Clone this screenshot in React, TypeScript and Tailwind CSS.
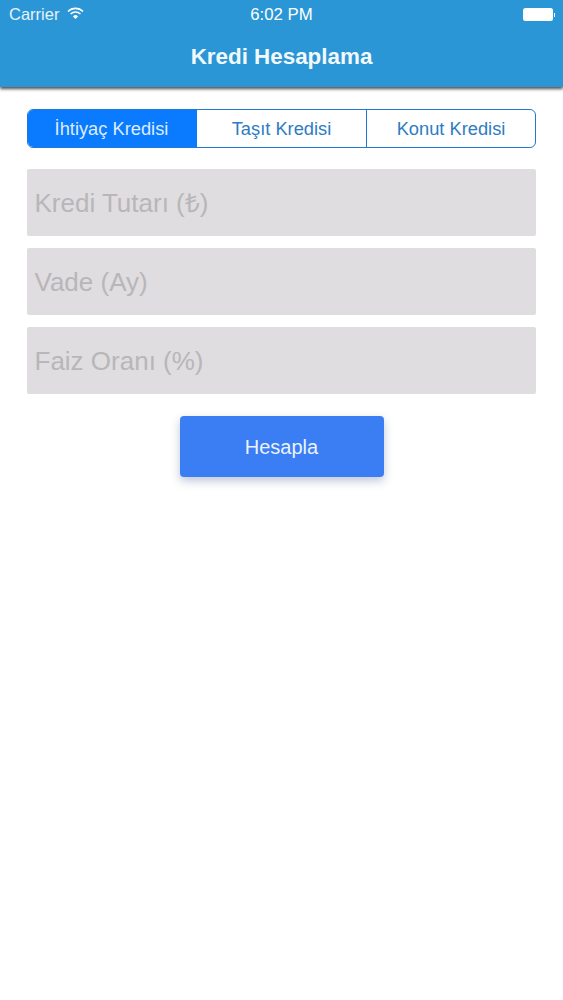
export default function App() {
  return (
    <div className="h-[1000px] w-[563px] overflow-hidden bg-white font-['Liberation_Sans',Arial,sans-serif]">
      <header className="flex h-[87px] flex-col bg-[#2a96d6] text-white shadow-[0_2px_3px_rgba(0,0,0,0.7)]">
        <div className="flex h-[29px] items-center justify-between pl-[9px] pr-[8px]">
          <div className="flex w-[180px] items-center gap-[8px]">
            <span className="text-[16.5px] leading-none text-[#e6f3fb]">Carrier</span>
            <svg width="17" height="13" viewBox="0 0 17 13" className="mb-[3px]">
              <path d="M1 4.5a10.5 10.5 0 0 1 15 0" fill="none" stroke="white" strokeWidth="1.6" />
              <path d="M3.6 7a7 7 0 0 1 9.8 0" fill="none" stroke="white" strokeWidth="1.6" />
              <path d="M6 9.4a3.5 3.5 0 0 1 5 0L8.5 12z" fill="white" />
            </svg>
          </div>
          <span className="pt-[1px] pr-[1px] text-[16.8px] font-normal leading-none">6:02 PM</span>
          <div className="flex w-[180px] items-center justify-end">
            <div className="h-[13px] w-[30px] rounded-[2.5px] bg-white" />
            <div className="ml-[1px] h-[4px] w-[1.5px] bg-white" />
          </div>
        </div>
        <div className="flex h-[56px] items-center justify-center">
          <h1 className="text-[22.4px] font-bold leading-none text-[#f2f9fd]">Kredi Hesaplama</h1>
        </div>
      </header>

      <main className="flex flex-col px-[27px]">
        <div className="mt-[22px] flex h-[39px] overflow-hidden rounded-[6px] border-[1.5px] border-[#2079d2] text-[18.3px] text-[#2d7cc4]">
          <div className="flex w-[169px] items-center justify-center bg-[#0a7aff] pr-[2px] text-[#dcecff]">İhtiyaç Kredisi</div>
          <div className="flex w-[170px] items-center justify-center border-r-[1.5px] border-[#2079d2]">Taşıt Kredisi</div>
          <div className="flex flex-1 items-center justify-center">Konut Kredisi</div>
        </div>

        <div className="mt-[21px] flex flex-col gap-[12px]">
          {["Kredi Tutarı (₺)", "Vade (Ay)", "Faiz Oranı (%)"].map((label) => (
            <div
              key={label}
              className="flex h-[67px] items-center rounded-[2px] bg-[#dfdddf] pl-[7.5px] pt-[2px] text-[26px] text-[#b8b6b8]"
            >
              {label}
            </div>
          ))}
        </div>

        <button className="mx-auto mt-[22px] flex h-[61px] w-[204px] items-center justify-center rounded-[4px] bg-[#3b7df2] text-[20px] text-[#eaf3ff] shadow-[0_4px_10px_rgba(40,70,130,0.3)]">
          Hesapla
        </button>
      </main>
    </div>
  );
}
